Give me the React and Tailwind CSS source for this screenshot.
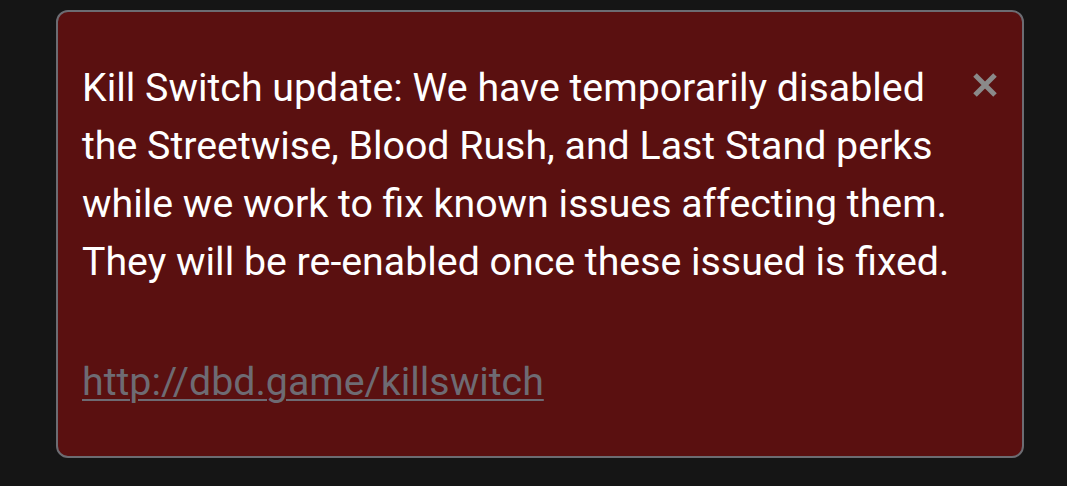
export default function App() {
  return (
    <div className="w-[1067px] h-[486px] bg-[#151515] pt-[10px] pl-[56px]" style={{ fontFamily: "Roboto, 'Noto Sans', sans-serif" }}>
      <div className="relative w-[968px] h-[448px] rounded-[12px] border-2 border-[#6c6c72] bg-[#5a1010] pl-[24px] pt-[47px]">
        <p className="w-[885px] text-[39.3px] leading-[58px] text-white">
          Kill Switch update: We have temporarily disabled the Streetwise, Blood Rush, and Last Stand perks while we work to fix known issues affecting them. They will be re-enabled once these issued is fixed.
        </p>
        <p className="mt-[62px] text-[39.3px] leading-[58px]">
          <a href="#" className="text-[#6e6b73] underline decoration-2 underline-offset-[4px]">http://dbd.game/killswitch</a>
        </p>
        <button className="absolute right-[22px] top-[58px] w-[30px] h-[30px] flex items-center justify-center">
          <svg width="26" height="26" viewBox="0 0 26 26">
            <path d="M3 3 L23 23 M23 3 L3 23" stroke="#8a8a8a" strokeWidth="5" strokeLinecap="butt" />
          </svg>
        </button>
      </div>
    </div>
  );
}
